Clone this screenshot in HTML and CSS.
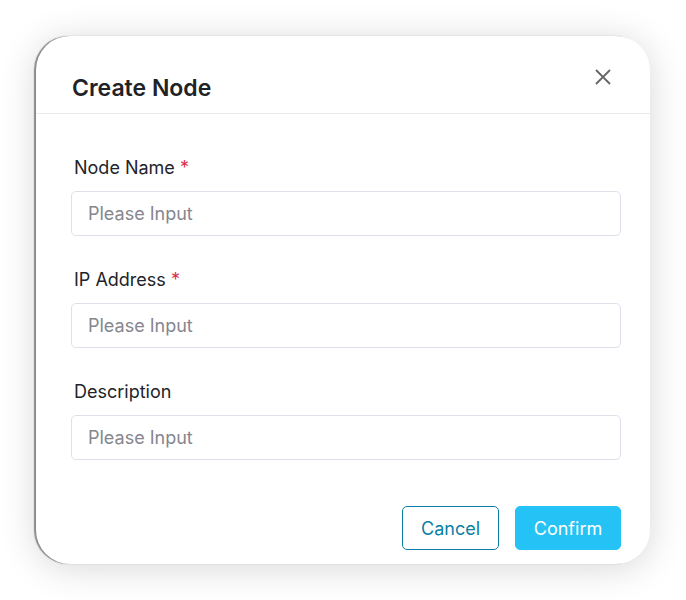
FILE: index.html
```html
<!DOCTYPE html>
<html>
<head>
<meta charset="utf-8">
<link rel="stylesheet" href="styles.css">
</head>
<body>
<div class="dialog">
  <div class="header">
    <div class="title">Create Node</div>
    <button class="close" aria-label="Close">
      <svg width="16" height="16" viewBox="0 0 16 16"><path d="M1 1L15 15M15 1L1 15" stroke="#666" stroke-width="1.8" fill="none"/></svg>
    </button>
  </div>
  <div class="body">
    <div class="field">
      <label class="label">Node Name <span class="req">*</span></label>
      <input class="input" placeholder="Please Input">
    </div>
    <div class="field">
      <label class="label">IP Address <span class="req">*</span></label>
      <input class="input" placeholder="Please Input">
    </div>
    <div class="field">
      <label class="label">Description</label>
      <input class="input" placeholder="Please Input">
    </div>
  </div>
  <div class="footer">
    <button class="btn cancel">Cancel</button>
    <button class="btn confirm">Confirm</button>
  </div>
</div>
</body>
</html>
```
FILE: styles.css
```css
html, body {
  margin: 0;
  padding: 0;
  background: #ffffff;
}
body {
  font-family: Inter, "Noto Sans", sans-serif;
  padding: 36px;
}
.dialog {
  width: 614px;
  height: 528px;
  box-sizing: border-box;
  background: #fff;
  border-radius: 34px;
  box-shadow: -2px 0 1px #8a8a8a, 0 4px 36px rgba(0,0,0,0.16);
  display: flex;
  flex-direction: column;
}
.header {
  display: flex;
  justify-content: space-between;
  align-items: flex-start;
  padding: 33px 39px 10px 36px;
  border-bottom: 1px solid #ebebef;
}
.title {
  margin-top: 4px;
  font-size: 23px;
  line-height: 30px;
  font-weight: 600;
  color: #1f2226;
}
.close {
  width: 16px;
  height: 16px;
  padding: 0;
  border: none;
  background: none;
  display: block;
}
.close svg { display: block; }
.body {
  padding: 42px 29px 0 35px;
  display: flex;
  flex-direction: column;
  gap: 32px;
}
.field {
  display: flex;
  flex-direction: column;
  gap: 11px;
}
.label {
  padding-left: 3px;
  font-size: 18px;
  line-height: 24px;
  color: #222429;
}
.req {
  color: #d9304f;
}
.input {
  height: 45px;
  box-sizing: border-box;
  border: 1px solid #e0e0ea;
  border-radius: 5px;
  padding: 0 16px;
  font-family: Inter, "Noto Sans", sans-serif;
  font-size: 18px;
  color: #222;
  outline: none;
}
.input::placeholder {
  color: #86868e;
}
.footer {
  margin-top: auto;
  padding: 0 29px 14px 35px;
  display: flex;
  justify-content: flex-end;
  gap: 16px;
}
.btn {
  height: 44px;
  box-sizing: border-box;
  border-radius: 5px;
  font-family: Inter, "Noto Sans", sans-serif;
  font-size: 18px;
}
.cancel {
  width: 97px;
  background: #fff;
  border: 1px solid #0a7fa6;
  color: #0a7fa6;
}
.confirm {
  width: 106px;
  background: #25c3f5;
  border: 1px solid #25c3f5;
  color: #fff;
}
```
